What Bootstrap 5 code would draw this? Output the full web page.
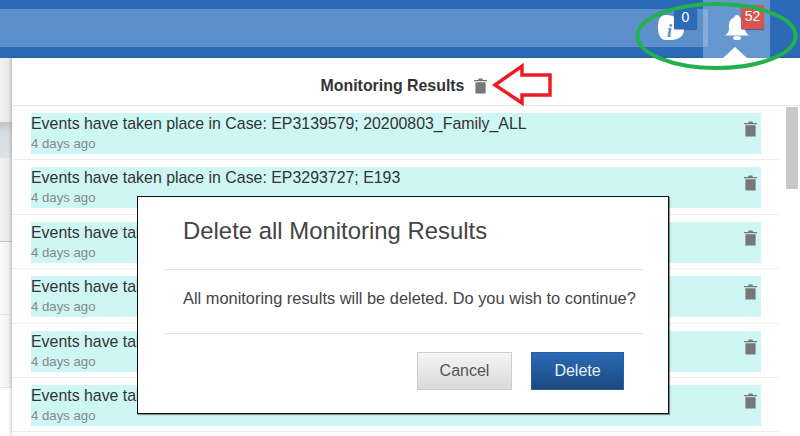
<!DOCTYPE html>
<html lang="en">
<head>
  <meta charset="UTF-8">
  <meta name="viewport" content="width=device-width, initial-scale=1.0">
  <title>Monitoring Results</title>
  <link href="https://cdn.jsdelivr.net/npm/bootstrap@5.3.0/dist/css/bootstrap.min.css" rel="stylesheet">
  <style>
    html, body { height: 436px; overflow: hidden; }
    body { font-family: "Liberation Sans", Arial, sans-serif; background: #fff; color: #333; }
    .top-bar { height: 58px; background: #2a6ab7; padding-right: 30px; }
    .top-band { margin-top: 9px; height: 38px; background: #5d90cb; }
    .bell-cell { width: 67px; height: 58px; background: #6797cf; }
    .bell-cell::before { content: ""; position: absolute; left: 0; top: 9px; width: 5px; height: 38px; background: #86abd9; border-radius: 0 2px 2px 0; }
    .bell-tip { left: 20px; bottom: 0; width: 0; height: 0; border: 12px solid transparent; border-top: 0; border-bottom: 11px solid #fff; }
    .bell-icon { margin-top: 15px; }
    .info-icon { left: 658px; top: 14px; }
    .alert-tag { font-size: 14px; line-height: 19px; color: #fff; border-radius: 1px; box-shadow: 0 1px 1px rgba(0,0,0,.35); text-align: center; }
    .tag-info { left: 674px; top: 8px; width: 23px; height: 21px; background: #2a6ab7; }
    .tag-bell { left: 741px; top: 5px; width: 23px; height: 24px; background: #d9534f; padding-top: 2px; }
    .page-main { height: 378px; }
    .side-strip { width: 12px; background: #fff; }
    .strip-a { height: 64px; background: linear-gradient(90deg, #f1f1f1, #e6e6e6); }
    .strip-b { height: 36px; background: linear-gradient(#bfc4c8, #d6dce0 30%, #dce1e4); }
    .strip-c { height: 84px; background: linear-gradient(90deg, #f1f1f1, #e6e6e6); border-bottom: 1px solid #c4c4c4; }
    .strip-d { height: 73px; background: linear-gradient(90deg, #fcfcfc, #ececec); border-bottom: 1px solid #e2e2e2; }
    .results-panel { width: 788px; background: #fff; box-shadow: -1px 0 3px rgba(0,0,0,.22); }
    .panel-title { height: 48px; padding: 19px 4px 0 0; border-bottom: 1px solid #e8e8e8; font-size: 15.9px; line-height: 18px; font-weight: 700; color: #333; }
    .result-row { height: 54.4px; margin-right: 21px; padding: 7px 19px 0; border-bottom: 1px solid #eee; }
    .result-fill { height: 41px; width: 730px; background: #cdf6f4; }
    .result-text { font-size: 15.9px; line-height: 21px; color: #333; white-space: nowrap; }
    .result-age { font-size: 13.2px; line-height: 19px; color: #888; }
    .trash-gray { width: 13px; height: 16px; fill: #777; }
    .trash-row { margin: 8px 4px 0 0; }
    .trash-head { margin: 1px 0 0 2px; }
    .panel-scroll { left: 786px; top: 107px; width: 12px; height: 82px; background: #c8c8c8; }
    .modal.confirm-wrap { display: block; position: absolute; overflow: hidden; }
    .confirm-wrap .modal-dialog { margin: 196px 0 0 137px; width: 532px; max-width: 532px; }
    .confirm-wrap .modal-content { height: 218px; border: 1px solid #111; border-radius: 0; padding: 0 25px 0 26px; box-shadow: 1px 1px 1px rgba(0,0,0,.4); }
    .confirm-wrap .modal-header { height: 73px; padding: 0 19px 4px; border-bottom: 1px solid #e6e6e6; border-radius: 0; }
    .confirm-wrap .modal-title { font-size: 23.9px; line-height: 28px; color: #444; }
    .confirm-wrap .modal-body { height: 64px; flex: none; padding: 18px 19px 0; font-size: 16.4px; line-height: 20px; color: #444; border-bottom: 1px solid #e6e6e6; white-space: nowrap; }
    .confirm-wrap .modal-footer { padding: 18px 19px 0 0; gap: 19px; border: 0; }
    .confirm-wrap .modal-footer > * { margin: 0; }
    .btn-grey, .btn-navy { height: 38px; font-size: 16px; border-radius: 0; padding: 0; }
    .btn-grey { width: 95px; color: #555; background: linear-gradient(#f5f5f5, #d9d9d9); border: 1px solid #ccc; }
    .btn-navy { width: 93px; color: #e8eef6; background: linear-gradient(#2a6ab7, #1c4a7e); border: 1px solid #2a5f9f; }
    .note-layer { left: 0; top: 0; width: 800px; height: 436px; pointer-events: none; }
  </style>
</head>
<body>
<div class="top-bar d-flex">
  <div class="top-band flex-grow-1"></div>
  <div class="bell-cell position-relative d-flex justify-content-center">
    <svg class="bell-icon" width="24" height="25" viewBox="0 0 24 25" fill="#fff"><path d="M12 0c1.600 0 2.600 1 2.800 2.500C18 3.500 20 6.500 20 10v4c0 2.500 1.500 4.500 4 6.500H0c2.500-2 4-4 4-6.500v-4c0-3.500 2-6.500 5.200-7.500C9.400 1 10.400 0 12 0z"/><ellipse cx="12" cy="23" rx="4" ry="2"/></svg>
    <div class="bell-tip position-absolute"></div>
  </div>
</div>
<svg class="info-icon position-absolute" width="26" height="27" viewBox="0 0 26 27"><path d="M8 1C2 1 0 6 0 13s2 13 8 13c5 0 18 1 18-11C26 5 15 1 8 1z" fill="#fff"/><text x="9" y="23" font-family="Liberation Serif, serif" font-style="italic" font-weight="700" font-size="18" fill="#5d90cb">i</text></svg>
<div class="alert-tag tag-info position-absolute">0</div>
<div class="alert-tag tag-bell position-absolute">52</div>

<div class="page-main d-flex">
  <div class="side-strip flex-shrink-0">
    <div class="strip-a"></div>
    <div class="strip-b"></div>
    <div class="strip-c"></div>
    <div class="strip-d"></div>
    <div class="strip-d"></div>
  </div>
  <div class="results-panel">
    <div class="panel-title d-flex justify-content-center align-items-start gap-2">
      <span>Monitoring Results</span>
      <svg class="trash-gray trash-head" viewBox="0 0 14 16"><path d="M5 0h4l.6 1.500H14v1.500H0V1.500h4.400zM1.500 4h11v12h-11z"/></svg>
    </div>
    <div class="result-row">
      <div class="result-fill d-flex justify-content-between align-items-start">
        <div><div class="result-text">Events have taken place in Case: EP3139579; 20200803_Family_ALL</div><div class="result-age">4 days ago</div></div>
        <svg class="trash-gray trash-row" viewBox="0 0 14 16"><path d="M5 0h4l.6 1.500H14v1.500H0V1.500h4.400zM1.500 4h11v12h-11z"/></svg>
      </div>
    </div>
    <div class="result-row">
      <div class="result-fill d-flex justify-content-between align-items-start">
        <div><div class="result-text">Events have taken place in Case: EP3293727; E193</div><div class="result-age">4 days ago</div></div>
        <svg class="trash-gray trash-row" viewBox="0 0 14 16"><path d="M5 0h4l.6 1.500H14v1.500H0V1.500h4.400zM1.500 4h11v12h-11z"/></svg>
      </div>
    </div>
    <div class="result-row">
      <div class="result-fill d-flex justify-content-between align-items-start">
        <div><div class="result-text">Events have taken</div><div class="result-age">4 days ago</div></div>
        <svg class="trash-gray trash-row" viewBox="0 0 14 16"><path d="M5 0h4l.6 1.500H14v1.500H0V1.500h4.400zM1.500 4h11v12h-11z"/></svg>
      </div>
    </div>
    <div class="result-row">
      <div class="result-fill d-flex justify-content-between align-items-start">
        <div><div class="result-text">Events have taken</div><div class="result-age">4 days ago</div></div>
        <svg class="trash-gray trash-row" viewBox="0 0 14 16"><path d="M5 0h4l.6 1.500H14v1.500H0V1.500h4.400zM1.500 4h11v12h-11z"/></svg>
      </div>
    </div>
    <div class="result-row">
      <div class="result-fill d-flex justify-content-between align-items-start">
        <div><div class="result-text">Events have taken</div><div class="result-age">4 days ago</div></div>
        <svg class="trash-gray trash-row" viewBox="0 0 14 16"><path d="M5 0h4l.6 1.500H14v1.500H0V1.500h4.400zM1.500 4h11v12h-11z"/></svg>
      </div>
    </div>
    <div class="result-row">
      <div class="result-fill d-flex justify-content-between align-items-start">
        <div><div class="result-text">Events have taken</div><div class="result-age">4 days ago</div></div>
        <svg class="trash-gray trash-row" viewBox="0 0 14 16"><path d="M5 0h4l.6 1.500H14v1.500H0V1.500h4.400zM1.500 4h11v12h-11z"/></svg>
      </div>
    </div>
  </div>
</div>
<div class="panel-scroll position-absolute"></div>

<div class="modal confirm-wrap">
  <div class="modal-dialog">
    <div class="modal-content">
      <div class="modal-header"><h5 class="modal-title">Delete all Monitoring Results</h5></div>
      <div class="modal-body">All monitoring results will be deleted. Do you wish to continue?</div>
      <div class="modal-footer">
        <button type="button" class="btn btn-grey">Cancel</button>
        <button type="button" class="btn btn-navy">Delete</button>
      </div>
    </div>
  </div>
</div>

<svg class="note-layer position-absolute" viewBox="0 0 800 436">
  <ellipse cx="716.500" cy="36" rx="79" ry="32" fill="none" stroke="#22b14c" stroke-width="4"/>
  <path d="M495 85l27-19v9h28v20h-28v8z" fill="#fff" stroke="#ed1c24" stroke-width="3.500"/>
</svg>
</body>
</html>
